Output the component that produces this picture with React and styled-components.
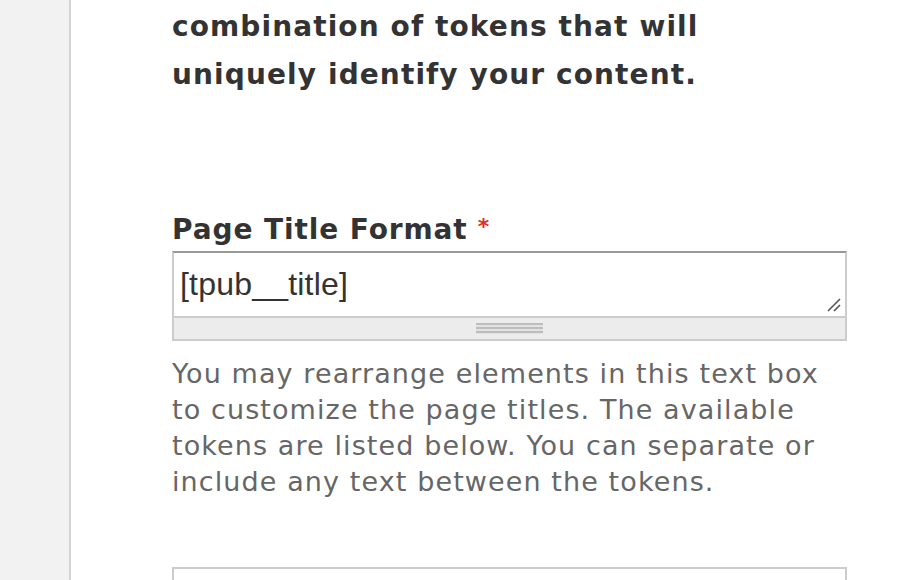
import React from "react";
import styled, { createGlobalStyle } from "styled-components";

const GlobalStyle = createGlobalStyle`
  html, body {
    margin: 0;
    padding: 0;
    background: #fff;
    overflow: hidden;
  }
  body {
    font-family: "DejaVu Sans", "Liberation Sans", sans-serif;
    color: #333;
  }
`;

const Page = styled.div`
  display: flex;
  height: 580px;
  width: 906px;
  overflow: hidden;
`;

const Sidebar = styled.div`
  width: 69px;
  flex: none;
  background: #f2f2f2;
  border-right: 2px solid #d3d3d3;
`;

const Main = styled.div`
  flex: 1;
  padding: 3px 0 0 101px;
`;

const Column = styled.div`
  width: 675px;
`;

const Lead = styled.p`
  margin: 0;
  font-size: 28px;
  font-weight: bold;
  line-height: 48px;
  letter-spacing: 1.1px;
  color: #333;
  white-space: nowrap;
`;

const FormItem = styled.div`
  margin-top: ${(p) => p.$gap || 0}px;
`;

const Label = styled.label`
  display: block;
  font-size: 28px;
  font-weight: bold;
  line-height: 40px;
  letter-spacing: 0.9px;
  margin-bottom: 1px;
  color: #333;
`;

const Required = styled.span`
  color: #e0301e;
  font-size: 22px;
  margin-left: 10px;
  vertical-align: 5px;
`;

const Field = styled.div`
  position: relative;
  box-sizing: border-box;
  height: 65px;
  border: 2px solid #ccc;
  border-top-color: #999;
  border-bottom: none;
  background: #fff;
`;

const FieldText = styled.div`
  font-family: "Liberation Sans", Arial, sans-serif;
  font-size: 32px;
  line-height: 36px;
  padding: 13px 0 0 6px;
  letter-spacing: 0.2px;
  color: #333;
`;

const ResizeHandle = styled.svg`
  position: absolute;
  right: 4px;
  bottom: 4px;
`;

const Grippie = styled.div`
  height: 21px;
  box-sizing: content-box;
  border: 2px solid #ccc;
  background: #ececec;
  display: flex;
  align-items: center;
  justify-content: center;
`;

const GripLines = styled.div`
  width: 67px;
  height: 11px;
  background: repeating-linear-gradient(
    to bottom,
    #bdbdbd 0,
    #bdbdbd 2px,
    #e2e2e2 2px,
    #e2e2e2 4px
  );
`;

const Description = styled.div`
  margin-top: 15px;
  font-size: 27px;
  line-height: 36px;
  color: #666;
  letter-spacing: 1.1px;
  white-space: nowrap;
`;

const NextBox = styled.div`
  margin-top: 67px;
  height: 60px;
  border: 2px solid #ccc;
  border-bottom: none;
`;

export default function App() {
  return (
    <>
      <GlobalStyle />
      <Page>
        <Sidebar />
        <Main>
          <Column>
            <Lead>
              combination of tokens that will
              <br />
              uniquely identify your content.
            </Lead>
            <FormItem $gap={108}>
              <Label>
                Page Title Format<Required>*</Required>
              </Label>
              <Field>
                <FieldText>[tpub__title]</FieldText>
                <ResizeHandle width="14" height="14" viewBox="0 0 14 14">
                  <path d="M1 13 L13 1 M7 13 L13 7" stroke="#555" strokeWidth="1.6" fill="none" />
                </ResizeHandle>
              </Field>
              <Grippie>
                <GripLines />
              </Grippie>
              <Description>
                You may rearrange elements in this text box
                <br />
                to customize the page titles. The available
                <br />
                tokens are listed below. You can separate or
                <br />
                include any text between the tokens.
              </Description>
            </FormItem>
            <NextBox />
          </Column>
        </Main>
      </Page>
    </>
  );
}
